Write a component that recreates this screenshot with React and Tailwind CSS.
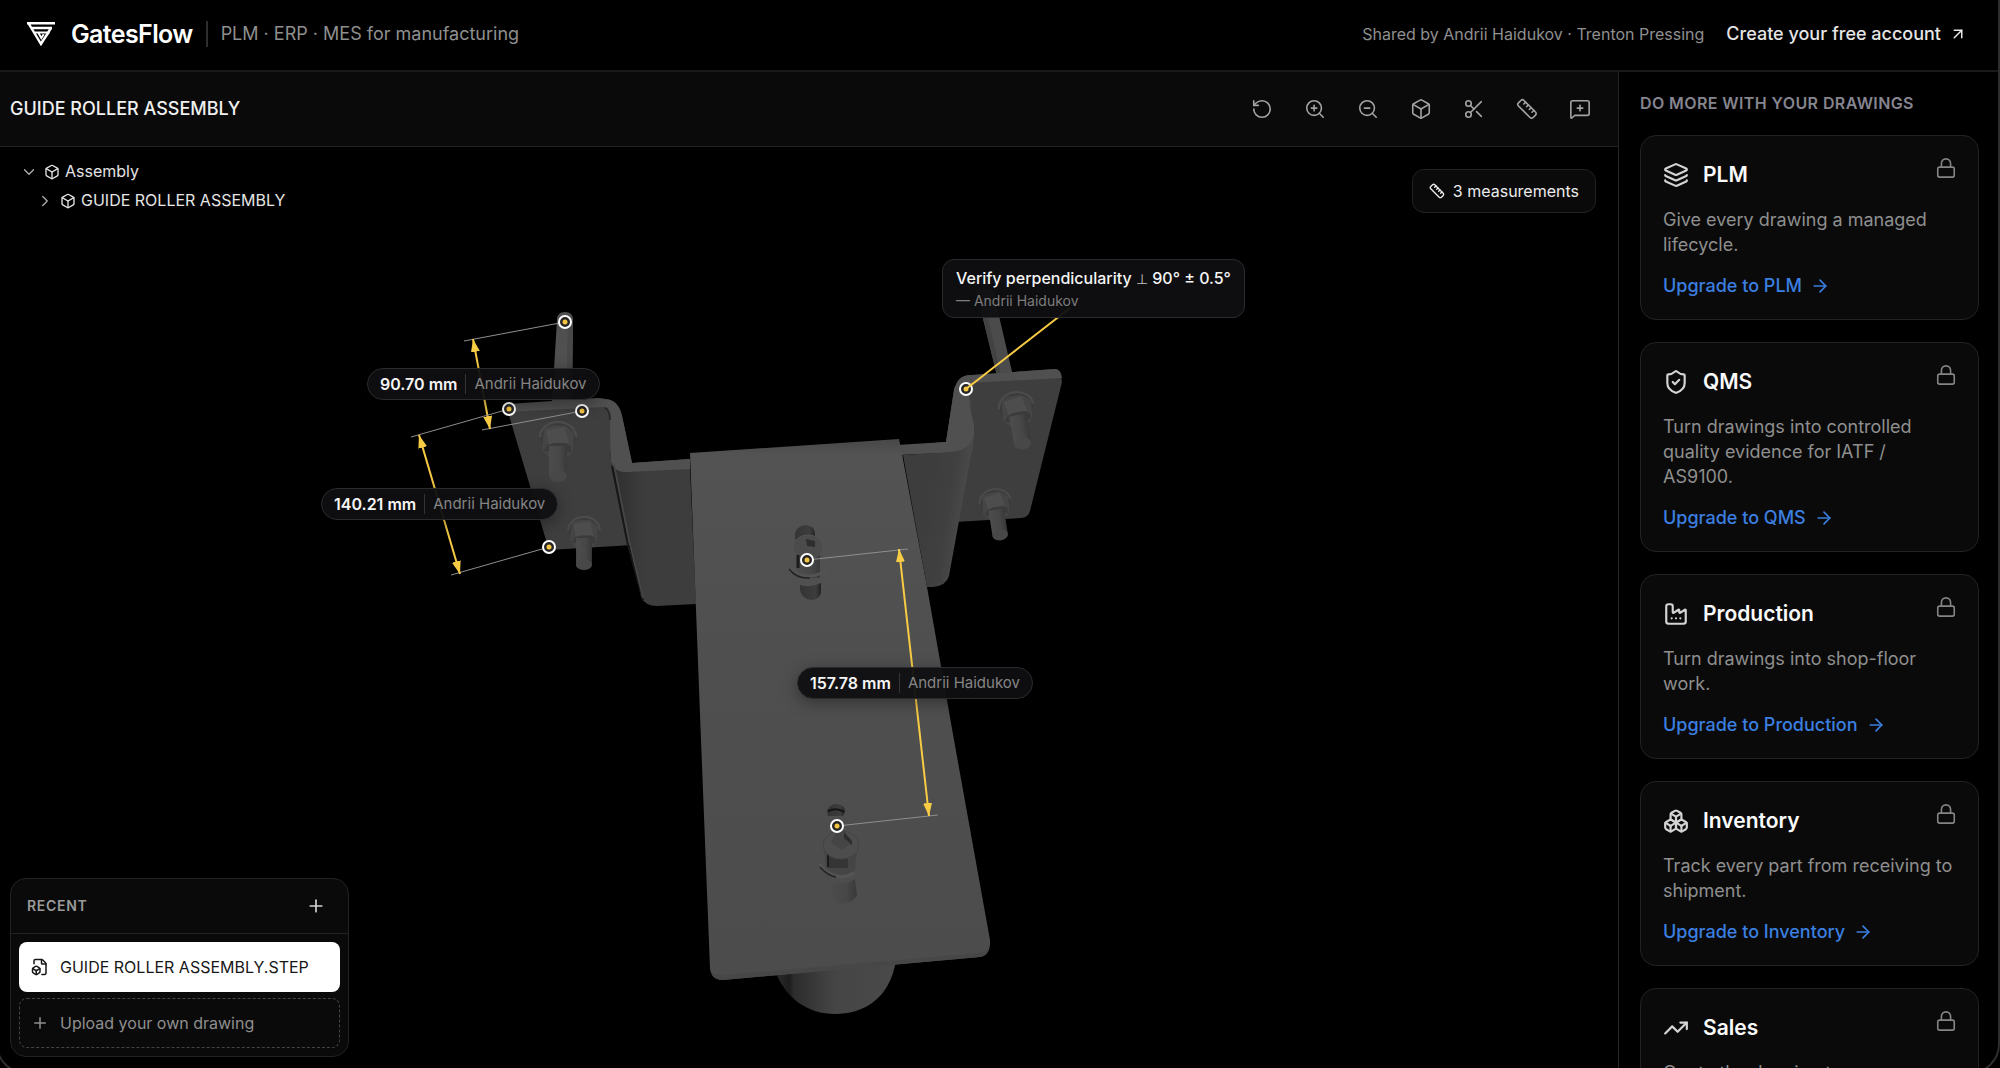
import {
  ArrowRight, ArrowUpRight, Box, Boxes, ChevronDown, ChevronRight, Factory, FileBox, Layers, Lock,
  MessageSquarePlus, Plus, RotateCcw, Ruler, Scissors, ShieldCheck, TrendingUp, ZoomIn, ZoomOut,
} from 'lucide-react';

const tools = [
  { label: 'Reset view', Icon: RotateCcw },
  { label: 'Zoom in', Icon: ZoomIn },
  { label: 'Zoom out', Icon: ZoomOut },
  { label: 'Standard views', Icon: Box },
  { label: 'Section cut', Icon: Scissors },
  { label: 'Measure', Icon: Ruler },
  { label: 'Add comment', Icon: MessageSquarePlus },
];

const modules = [
  { name: 'PLM', Icon: Layers, text: 'Give every drawing a managed lifecycle.' },
  { name: 'QMS', Icon: ShieldCheck, text: 'Turn drawings into controlled quality evidence for IATF / AS9100.' },
  { name: 'Production', Icon: Factory, text: 'Turn drawings into shop-floor work.' },
  { name: 'Inventory', Icon: Boxes, text: 'Track every part from receiving to shipment.' },
  { name: 'Sales', Icon: TrendingUp, text: 'Quote the drawing to your customers.' },
];

const dimensions = [
  { value: '90.70 mm', a: [565, 322], b: [582, 411], ea: [464, 341], eb: [482, 430], from: [473, 339], to: [490, 429], pos: 'left-[367px] top-[221px]' },
  { value: '140.21 mm', a: [509, 409], b: [549, 547], ea: [411, 437], eb: [451, 575], from: [419, 435], to: [460, 574], pos: 'left-[321px] top-[341px]' },
  { value: '157.78 mm', a: [807, 560], b: [837, 826], ea: [908, 549], eb: [938, 815], from: [899, 549], to: [929, 816], pos: 'left-[797px] top-[520px]' },
];

function Logo() {
  return (
    <svg viewBox="0 0 28 24" className="w-7 h-6" fill="none" stroke="#fff" strokeWidth="2.4" aria-hidden="true">
      <path d="M0 1.2h28M4 6h21M1.4 1.2 14 22 24 6M21.5 10.5l-7.5 11" />
      <path d="M8 10.5h14.5M11.5 11l2.8 5 2.4-3.8" strokeWidth="2" />
    </svg>
  );
}

function Header() {
  return (
    <header className="flex h-18 shrink-0 items-center justify-between border-b-2 border-[#1a1a1a] pb-0.5 pl-[27px] pr-[33px]">
      <div className="flex items-center">
        <Logo />
        <span className="ml-4 text-[25px] font-semibold leading-8 tracking-tight">GatesFlow</span>
        <span className="mx-[13px] h-[26px] w-0.5 bg-[#2e2e2e]" />
        <span className="text-lg text-[#8f8f8f]">PLM · ERP · MES for manufacturing</span>
      </div>
      <div className="flex items-center gap-[22px]">
        <span className="text-base text-[#8f8f8f]">Shared by Andrii Haidukov · Trenton Pressing</span>
        <a href="#signup" className="flex items-center gap-2 text-lg font-medium text-[#e5e5e5]">
          Create your free account
          <ArrowUpRight className="size-[18px]" strokeWidth={2} />
        </a>
      </div>
    </header>
  );
}

// Hex nut with washer and the threaded end of the bolt
function Bolt({ x, y, turn = 0, s = 1 }) {
  return (
    <g transform={`translate(${x} ${y}) rotate(${turn}) scale(${s})`}>
      <path d="M-18 8A18 15 0 0 1 18 8L16 14H-16Z" fill="#3a3a3a" />
      <path d="M-18 7A18 15 0 0 1 18 7" fill="none" stroke="#4b4b4b" strokeWidth="2.5" />
      <path d="M-14 -2 -4 -5 8 -4 16 3 15 20 11 26H-10L-16 20Z" fill="#454545" />
      <path d="M-12 0 7 -3 11 13 3 16H-9Z" fill="#4d4d4d" />
      <path d="M-10 15 -4 13H8L13 16V22L-15 21Z" fill="#3b3b3b" />
      <path d="M-9 16H9V46A9 6 0 0 1 -9 46Z" fill="url(#shank)" />
      <ellipse cx="0" cy="46" rx="9" ry="6" fill="#484848" />
    </g>
  );
}

function Model() {
  return (
    <g>
      <defs>
        <linearGradient id="shank"><stop offset="0" stopColor="#4c4c4c" /><stop offset=".6" stopColor="#474747" /><stop offset="1" stopColor="#393939" /></linearGradient>
        <linearGradient id="plate" x1="0" y1="0" x2="0" y2="1"><stop offset="0" stopColor="#484848" /><stop offset=".03" stopColor="#535353" /><stop offset=".4" stopColor="#4f4f4f" /><stop offset="1" stopColor="#4c4c4c" /></linearGradient>
        <linearGradient id="roller"><stop offset="0" stopColor="#2c2c2c" /><stop offset=".13" stopColor="#1d1d1d" /><stop offset=".16" stopColor="#2c2c2c" /><stop offset=".5" stopColor="#454545" /><stop offset="1" stopColor="#4a4a4a" /></linearGradient>
        <linearGradient id="hole"><stop offset="0" stopColor="#343434" /><stop offset=".75" stopColor="#3d3d3d" /><stop offset="1" stopColor="#222" /></linearGradient>
        <linearGradient id="webLeft" x1="612" y1="0" x2="645" y2="0" gradientUnits="userSpaceOnUse"><stop offset="0" stopColor="#2e2e2e" /><stop offset="1" stopColor="#3d3d3d" /></linearGradient>
        <linearGradient id="webRight" x1="925" y1="500" x2="966" y2="506" gradientUnits="userSpaceOnUse"><stop offset="0" stopColor="#3d3d3d" /><stop offset=".6" stopColor="#404040" /><stop offset="1" stopColor="#4b4b4b" /></linearGradient>
      </defs>

      {/* Guide rods */}
      <path d="M557 320Q557 312 565 312Q573 312 573 320L572 402H552Z" fill="#505050" />
      <path d="M568 314 573 320 572 402H566Z" fill="#484848" />
      <path d="M976 290H993L1013 376H997Z" fill="#4b4b4b" />
      <path d="M976 290H982L1001 376H997Z" fill="#424242" />

      {/* Left flange */}
      <path d="M508 404 597 398Q618 398 622 416L632 463 690 459V475L625 475 603 440 508 412Z" fill="#505050" />
      <path d="M508 412 605 407Q610 408 610 418L611 462 633 545 549 550Z" fill="#3e3e3e" />
      <path d="M605 407Q610 408 610 418L611 462Q614 473 627 473L690 469V459L632 463 622 416Q619 401 607 399Z" fill="#505050" />
      <path d="M605 408Q610 410 610 420" fill="none" stroke="#2a2a2a" strokeWidth="2" />
      <path d="M612 464Q616 473 627 472L690 469 696 604 657 606Q645 606 641 597Z" fill="url(#webLeft)" />
      <path d="M612 466 628 545 643 600" fill="none" stroke="#171717" strokeWidth="2" />
      <path d="M614 464 629 540 643 598" fill="none" stroke="#484848" strokeWidth="1.5" />

      {/* Right flange */}
      <path d="M954 390Q958 374 972 375L1055 369Q1061 369 1062 382L1030 511Q1028 518 1021 518L955 522Z" fill="#3e3e3e" />
      <path d="M954 390Q958 374 972 375L1055 369Q1061 369 1062 378L968 383 971 410 974 433 972 452 880 455V446L946 442Z" fill="#505050" />
      <path d="M968 400Q974 418 974 430Q974 450 950 452L903 455 927 587H933Q946 586 949 576L972 449 974 427Z" fill="url(#webRight)" />
      <path d="M966 392Q969 412 974 425V435Q971 450 950 452L900 455V446L946 442 954 390Z" fill="#505050" />

      <Bolt x={558} y={430} s={1} />
      <Bolt x={584} y={524} s={0.88} />
      <Bolt x={1015} y={400} s={0.96} turn={-10} />
      <Bolt x={994} y={496} s={0.86} turn={-9} />

      {/* Roller and centre plate */}
      <path d="M774 968C785 999 808 1014 835 1014S890 1000 896 960Z" fill="url(#roller)" />
      <path d="M690 453 899 439 902 454 927 587 954 740 990 940Q991 955 980 957L723 980Q711 980 710 968L701 740Z" fill="url(#plate)" />
      <path d="M711 972Q714 975 724 975L980 953Q986 952 989 946Q988 956 980 957L723 980Q713 980 711 972Z" fill="#474747" />

      {/* Upper slot */}
      <path d="M795 548V534Q796 526 806 525Q815 526 815 534V548Z" fill="url(#hole)" />
      <path d="M797 552H820V578H797Z" fill="url(#shank)" />
      <ellipse cx="808" cy="547" rx="15" ry="12" fill="#4b4b4b" stroke="#535353" />
      <path d="M806 539 815 541V547L807 546Z" fill="#2e2e2e" />
      <path d="M798 555V568" stroke="#1b1b1b" strokeWidth="3" />
      <path d="M790 568Q798 577 808 576Q820 576 826 569" fill="none" stroke="#535353" strokeWidth="3" />
      <path d="M789 569Q797 579 810 578" fill="none" stroke="#222" strokeWidth="1.5" />
      <path d="M800 585Q811 588 821 583V593Q819 600 811 600Q802 599 800 590Z" fill="url(#hole)" />

      {/* Lower slot */}
      <path d="M827 812Q828 804 837 804Q845 805 845 812L843 816H828Z" fill="url(#hole)" />
      <path d="M828 811Q837 807 844 812" fill="none" stroke="#151515" strokeWidth="2" />
      <path d="M823 840H858L855 870Q840 880 826 868Z" fill="#454545" />
      <path d="M828 856H848V868H828Z" fill="#353535" />
      <path d="M828 854V867" stroke="#1b1b1b" strokeWidth="2" />
      <ellipse cx="841" cy="845" rx="18" ry="14" fill="#4d4d4d" stroke="#444" />
      <path d="M831 843 837 830 845 832 852 843 842 850Z" fill="#454545" />
      <path d="M844 832 852 841V845L844 838Z" fill="#2c2c2c" />
      <path d="M820 864Q826 876 840 877Q849 877 854 873" fill="none" stroke="#545454" strokeWidth="3" />
      <path d="M820 867Q828 876 836 877" fill="none" stroke="#222" strokeWidth="1.5" />
      <path d="M830 882Q845 886 855 879L857 896Q850 904 841 904Q833 903 831 893Z" fill="url(#shank)" />
    </g>
  );
}

function Marker({ at }) {
  return (
    <g>
      <circle cx={at[0]} cy={at[1]} r="6" fill="#262626" stroke="#fff" strokeWidth="2" />
      <circle cx={at[0]} cy={at[1]} r="2.5" fill="#f5c542" />
    </g>
  );
}

function Canvas() {
  return (
    <svg viewBox="0 147 1618 921" className="absolute inset-0 size-full" role="img" aria-label="Guide roller assembly model">
      <Model />
      <defs>
        <marker id="arrow" viewBox="0 0 13 9" refX="13" refY="4.5" markerWidth="13" markerHeight="9" markerUnits="userSpaceOnUse" orient="auto-start-reverse">
          <path d="M0 0 13 4.5 0 9Z" fill="#f8cb45" />
        </marker>
      </defs>
      {dimensions.map((d) => (
        <g key={d.value}>
          <path d={`M${d.a}L${d.ea}M${d.b}L${d.eb}`} stroke="#8e8e8e" strokeWidth="1" />
          <path d={`M${d.from}L${d.to}`} stroke="#f8cb45" strokeWidth="2" markerStart="url(#arrow)" markerEnd="url(#arrow)" />
          <Marker at={d.a} />
          <Marker at={d.b} />
        </g>
      ))}
      <path d="M966 389 1070 308" stroke="#f8cb45" strokeWidth="2" />
      <Marker at={[966, 389]} />
      <path d="M966 389 972 384" stroke="#f8cb45" strokeWidth="2" />
    </svg>
  );
}

function Toolbar() {
  return (
    <div className="flex h-[75px] shrink-0 items-center justify-between border-b border-[#222] bg-[#0a0a0a] pl-2.5 pr-[22px]">
      <h1 className="text-lg font-medium text-[#f0f0f0]">GUIDE ROLLER ASSEMBLY</h1>
      <div className="flex gap-[21px]">
        {tools.map(({ label, Icon }) => (
          <button key={label} type="button" aria-label={label} className="grid size-8 place-items-center text-[#a3a3a3]">
            <Icon className="size-[22px]" strokeWidth={1.75} />
          </button>
        ))}
      </div>
    </div>
  );
}

function Tree() {
  return (
    <ul className="absolute left-5 top-2.5 text-base leading-[29px] text-[#e5e5e5]">
      <li>
        <button type="button" className="flex items-center">
          <ChevronDown className="size-[18px] text-[#b0b0b0]" strokeWidth={1.75} />
          <Box className="ml-1.5 mr-[5px] size-4" />
          Assembly
        </button>
        <ul className="pl-4">
          <li>
            <button type="button" className="flex items-center">
              <ChevronRight className="size-[18px] text-[#b0b0b0]" strokeWidth={1.75} />
              <Box className="ml-1.5 mr-[5px] size-4" />
              GUIDE ROLLER ASSEMBLY
            </button>
          </li>
        </ul>
      </li>
    </ul>
  );
}

function Recent() {
  return (
    <section className="absolute bottom-[11px] left-2.5 w-[339px] rounded-2xl border border-[#222] bg-[#0a0a0a]">
      <div className="flex h-[55px] items-center justify-between border-b border-[#222] pl-4 pr-[22px]">
        <h2 className="text-sm font-semibold tracking-wider text-[#9a9a9a]">RECENT</h2>
        <button type="button" aria-label="Add file" className="text-[#d4d4d4]">
          <Plus className="size-5" strokeWidth={2} />
        </button>
      </div>
      <div className="flex flex-col gap-1.5 p-2">
        <button type="button" className="flex h-[50px] items-center gap-[11px] rounded-lg bg-white px-3 text-base text-[#171717]">
          <FileBox className="size-[18px]" />
          GUIDE ROLLER ASSEMBLY.STEP
        </button>
        <button type="button" className="flex h-[50px] items-center gap-[11px] rounded-lg border border-dashed border-[#444] px-[11px] text-base text-[#8f8f8f]">
          <Plus className="size-[18px]" strokeWidth={2} />
          Upload your own drawing
        </button>
      </div>
    </section>
  );
}

function Viewer() {
  return (
    <div className="relative min-h-0 flex-1 overflow-hidden">
      <Canvas />
      <Tree />
      <button type="button" className="absolute right-[22px] top-[22px] flex h-11 items-center gap-2 rounded-xl border border-[#222] bg-[#0a0a0a] px-4 text-base text-[#ededed]">
        <Ruler className="size-4" />
        3 measurements
      </button>
      {dimensions.map((d) => (
        <div key={d.value} className={`absolute flex h-8 items-center rounded-full border border-[#2b2b2e] bg-[#0f0f11]/95 px-3 shadow-[0_4px_16px_rgba(0,0,0,0.35)] ${d.pos}`}>
          <span className="text-base font-semibold text-[#f5f5f5]">{d.value}</span>
          <span className="mx-2 h-5 w-px bg-[#333]" />
          <span className="text-[15px] text-[#858585]">Andrii Haidukov</span>
        </div>
      ))}
      <div className="absolute left-[942px] top-[112px] h-[59px] rounded-xl border border-[#2b2b2e] bg-[#0f0f11]/95 px-[13px] pt-1.5">
        <p className="text-base font-medium leading-6 text-[#f5f5f5]">Verify perpendicularity <span className="text-sm text-[#c4c4c4]">⊥</span> 90° ± 0.5°</p>
        <p className="text-sm leading-[22px] text-[#7d7d7d]">— Andrii Haidukov</p>
      </div>
      <Recent />
    </div>
  );
}

function ModuleCard({ name, text, Icon }) {
  return (
    <article className="rounded-2xl border border-[#222] bg-[#0a0a0a] py-[21px] pl-[22px] pr-[21px]">
      <div className="flex items-start justify-between">
        <h3 className="flex h-9 items-center gap-3.5 text-[21px] font-semibold leading-7 text-[#fafafa]">
          <Icon className="size-[26px] text-[#d4d4d4]" strokeWidth={2} />
          {name}
        </h3>
        <Lock className="size-[22px] text-[#858585]" strokeWidth={1.75} />
      </div>
      <p className="mt-3.5 text-lg leading-[25px] text-[#8f8f8f]">{text}</p>
      <a href={`#${name.toLowerCase()}`} className="mt-4 flex items-center gap-2 text-lg font-medium leading-[25px] text-[#3b7fe0]">
        Upgrade to {name}
        <ArrowRight className="size-5" strokeWidth={2} />
      </a>
    </article>
  );
}

export default function App() {
  return (
    <div className="relative flex h-screen flex-col overflow-hidden bg-black font-[Inter,sans-serif] text-white">
      <Header />
      <div className="flex min-h-0 flex-1">
        <main className="flex min-w-0 flex-1 flex-col">
          <Toolbar />
          <Viewer />
        </main>
        <aside className="w-[382px] shrink-0 overflow-hidden border-l border-[#262626] px-[21px] pt-[21px]">
          <h2 className="text-base font-semibold leading-5 tracking-wide text-[#85858f]">DO MORE WITH YOUR DRAWINGS</h2>
          <div className="mt-[22px] flex flex-col gap-[22px]">
            {modules.map((m) => <ModuleCard key={m.name} {...m} />)}
          </div>
        </aside>
      </div>
      {/* Rounded window edge */}
      <div className="pointer-events-none absolute -bottom-1.5 -left-1 -top-10 right-0 rounded-[30px] border-2 border-[#2e2e2e]" />
    </div>
  );
}
